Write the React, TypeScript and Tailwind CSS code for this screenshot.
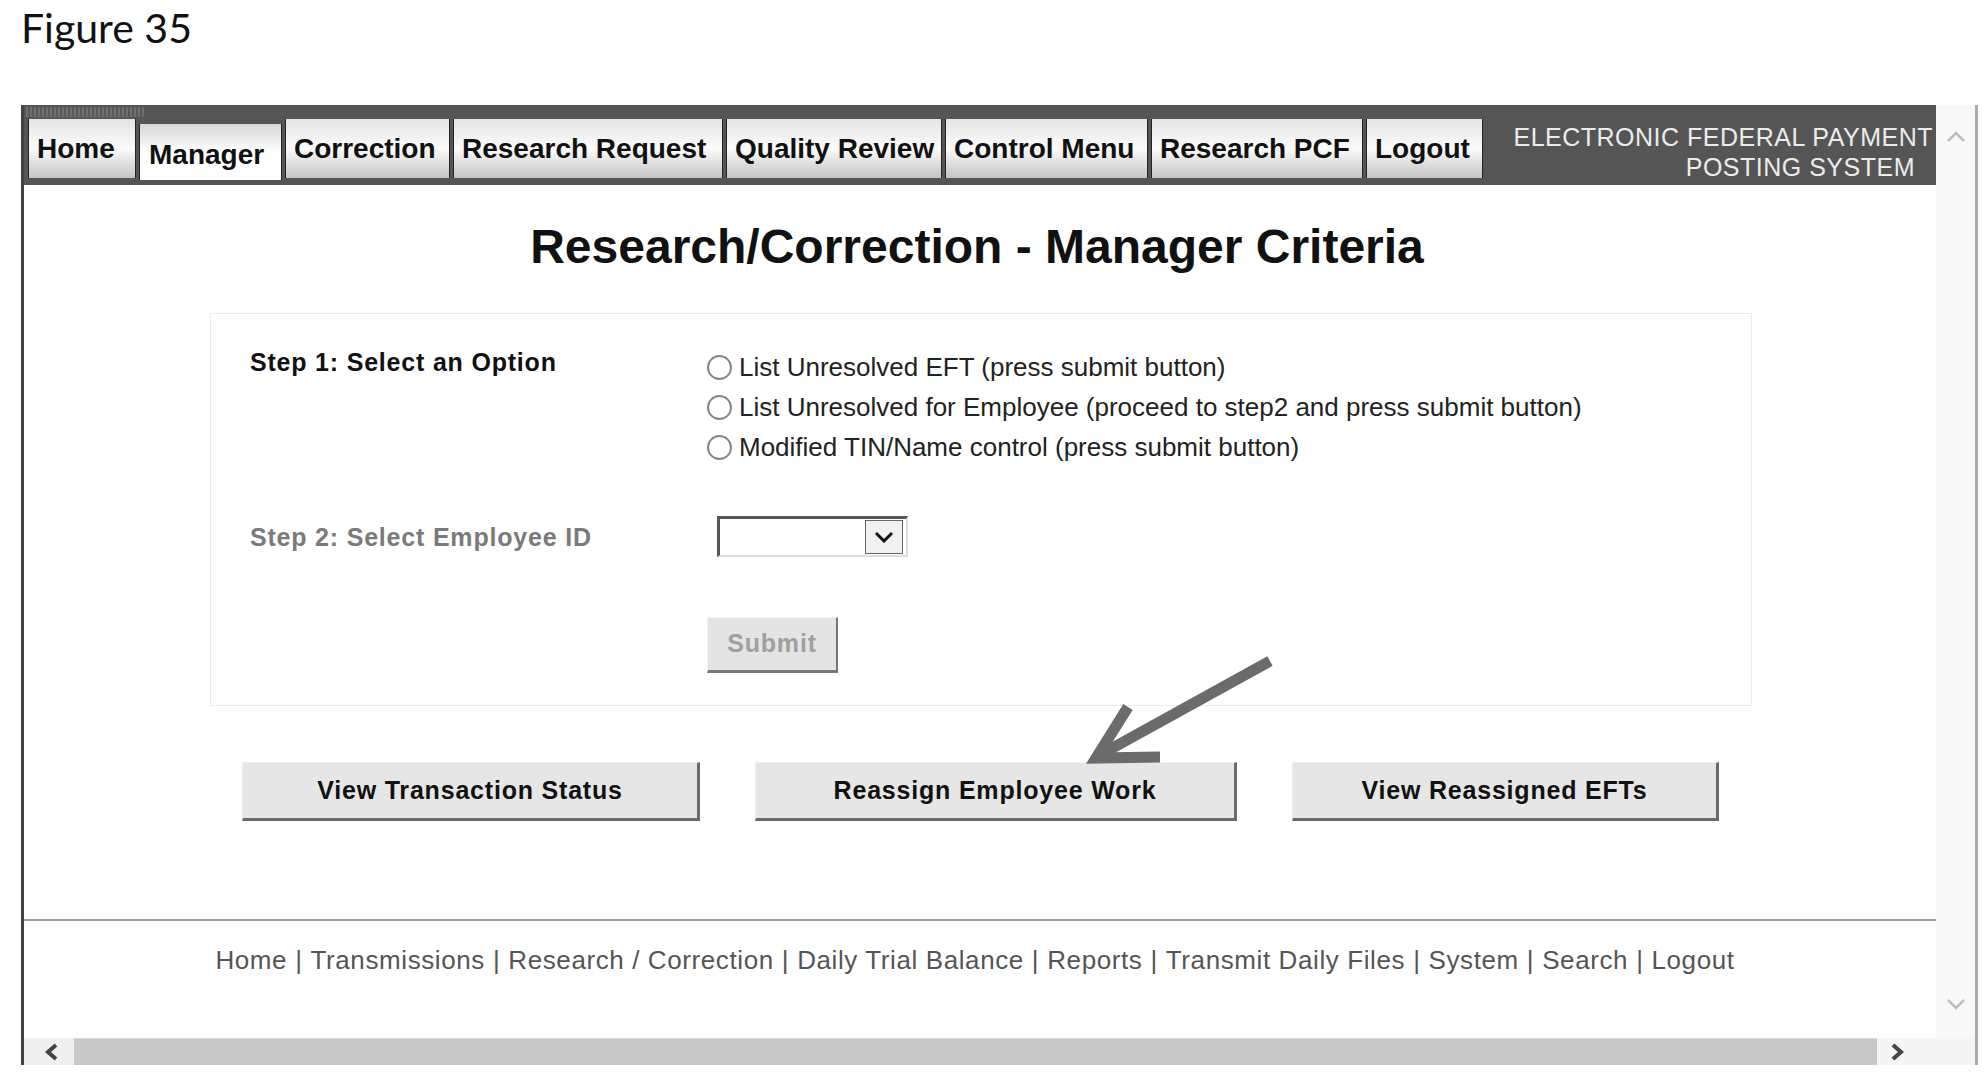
import React from "react";

const tabs = [
  { label: "Home", cls: "w-[108px]" },
  { label: "Manager", cls: "w-[143px]", active: true },
  { label: "Correction", cls: "w-[165px]" },
  { label: "Research Request", cls: "w-[270px]" },
  { label: "Quality Review", cls: "w-[216px]" },
  { label: "Control Menu", cls: "w-[203px]" },
  { label: "Research PCF", cls: "w-[212px]" },
  { label: "Logout", cls: "w-[117px]" },
];

const radios = [
  "List Unresolved EFT (press submit button)",
  "List Unresolved for Employee (proceed to step2 and press submit button)",
  "Modified TIN/Name control (press submit button)",
];

const footerLinks = [
  "Home",
  "Transmissions",
  "Research / Correction",
  "Daily Trial Balance",
  "Reports",
  "Transmit Daily Files",
  "System",
  "Search",
  "Logout",
];

function Tab({ label, cls, active }: { label: string; cls: string; active?: boolean }) {
  if (active) {
    return (
      <div
        className={`${cls} mt-[5px] h-[56px] flex items-center pl-[9px] pt-[6px] bg-gradient-to-b from-[#d6d6d6] via-[#ffffff] to-[#ffffff] border-x border-[#222] text-[28px] font-bold text-[#111] whitespace-nowrap`}
      >
        {label}
      </div>
    );
  }
  return (
    <div
      className={`${cls} h-[59px] flex items-center pl-[8px] bg-gradient-to-b from-[#e4e4e4] via-[#fbfbfb] to-[#c4c4c4] border-x border-[#222] text-[28px] font-bold text-[#111] whitespace-nowrap`}
    >
      {label}
    </div>
  );
}

export default function App() {
  return (
    <div className="relative w-[1988px] h-[1088px] bg-white overflow-hidden font-['Liberation_Sans',Arial,sans-serif]">
      {/* Figure caption */}
      <div className="h-[105px] pl-[21px] pt-[4px]">
        <div className="font-['Lato',sans-serif] text-[41px] leading-[48px] text-[#111]">Figure 35</div>
      </div>

      {/* Browser frame */}
      <div className="ml-[21px] w-[1957px] h-[960px] border-l-[3px] border-l-[#444] border-r-[3px] border-r-[#aaaaaa] flex flex-col">
        <div className="flex h-[933px]">
          {/* Content column */}
          <div className="w-[1912px] flex flex-col">
            {/* Nav bar */}
            <div className="relative h-[80px] bg-[#555555] flex pt-[14px] pl-[4px]">
              <span className="absolute left-[2px] top-[2px] w-[118px] h-[10px] bg-[repeating-linear-gradient(90deg,#7a7a7a_0px,#7a7a7a_2px,#5a5a5a_2px,#5a5a5a_4px)] opacity-70" />
              <div className="flex gap-[3px] items-start">
                {tabs.map((t) => (
                  <Tab key={t.label} label={t.label} cls={t.cls} active={t.active} />
                ))}
              </div>
              <div className="ml-auto mt-[3px] pr-[3px] text-right text-[25px] leading-[30px] tracking-[0.5px] text-[#ececec] whitespace-nowrap">
                <div>ELECTRONIC FEDERAL PAYMENT</div>
                <div className="mr-[18px]">POSTING SYSTEM</div>
              </div>
            </div>

            {/* Title */}
            <h1 className="mt-[34px] pr-[6px] text-center text-[48px] leading-[55px] font-bold text-[#111]">
              Research/Correction - Manager Criteria
            </h1>

            {/* Form box */}
            <div className="mt-[39px] ml-[186px] w-[1542px] h-[393px] border border-[#ececec] pl-[39px] pt-[33px] flex flex-col">
              <div className="flex">
                <div className="w-[461px] text-[25px] leading-[30px] font-bold tracking-[0.8px] text-[#111]">
                  Step 1: Select an Option
                </div>
                <div className="flex flex-col">
                  {radios.map((r) => (
                    <label key={r} className="h-[40px] flex items-center gap-[7px] text-[26px] text-[#222] whitespace-nowrap">
                      <span className="w-[25px] h-[25px] rounded-full border-2 border-[#858585] bg-white shrink-0 -ml-[4px]" />
                      <span>{r}</span>
                    </label>
                  ))}
                </div>
              </div>

              <div className="flex items-center mt-[49px]">
                <div className="w-[461px] text-[25px] leading-[30px] font-bold tracking-[0.8px] text-[#7a7a7a]">
                  Step 2: Select Employee ID
                </div>
                <div className="ml-[6px] w-[191px] h-[41px] flex items-center justify-end pr-[3px] bg-white border-t-[3px] border-l-[3px] border-t-[#555] border-l-[#555] border-b-2 border-r-2 border-b-[#dddddd] border-r-[#dddddd]">
                  <div className="w-[38px] h-[34px] bg-[#f0f0f0] border border-[#666] flex items-center justify-center">
                    <svg width="20" height="12" viewBox="0 0 20 12">
                      <polyline points="2,2 10,10 18,2" fill="none" stroke="#111" strokeWidth="3" />
                    </svg>
                  </div>
                </div>
              </div>

              <div className="mt-[60px] ml-[457px]">
                <button className="w-[131px] h-[56px] bg-[#e4e4e4] border-t border-l border-t-[#f2f2f2] border-l-[#f2f2f2] border-r-2 border-b-[3px] border-r-[#777] border-b-[#777] text-[25px] font-bold tracking-[0.8px] text-[#a0a0a0]">
                  Submit
                </button>
              </div>
            </div>

            {/* Bottom buttons */}
            <div className="mt-[56px] ml-[218px] flex gap-[55px]">
              <button className="w-[458px] h-[59px] bg-[#e6e6e6] border-t border-l border-t-[#f0f0f0] border-l-[#f0f0f0] border-r-[3px] border-b-[3px] border-r-[#6a6a6a] border-b-[#6a6a6a] text-[25px] font-bold tracking-[0.8px] text-[#111]">
                View Transaction Status
              </button>
              <button className="w-[482px] h-[59px] bg-[#e6e6e6] border-t border-l border-t-[#f0f0f0] border-l-[#f0f0f0] border-r-[3px] border-b-[3px] border-r-[#6a6a6a] border-b-[#6a6a6a] text-[25px] font-bold tracking-[0.8px] text-[#111]">
                Reassign Employee Work
              </button>
              <button className="w-[427px] h-[59px] bg-[#e6e6e6] border-t border-l border-t-[#f0f0f0] border-l-[#f0f0f0] border-r-[3px] border-b-[3px] border-r-[#6a6a6a] border-b-[#6a6a6a] text-[25px] font-bold tracking-[0.8px] text-[#111]">
                View Reassigned EFTs
              </button>
            </div>

            {/* Footer */}
            <div className="mt-[98px] h-[2px] bg-[#a0a0a0]" />
            <div className="mt-[24px] pr-[10px] text-center text-[26px] leading-[31px] tracking-[0.6px] text-[#555] whitespace-nowrap">
              {footerLinks.map((l, i) => (
                <span key={l}>
                  {i > 0 && <span className="mx-[8px]">|</span>}
                  {l}
                </span>
              ))}
            </div>
          </div>

          {/* Vertical scrollbar */}
          <div className="flex-1 bg-[#f8f8f8] flex flex-col justify-between items-center pt-[26px] pb-[28px]">
            <svg width="20" height="12" viewBox="0 0 20 12">
              <polyline points="2,10 10,2 18,10" fill="none" stroke="#bdbdbd" strokeWidth="2.5" />
            </svg>
            <svg width="20" height="12" viewBox="0 0 20 12">
              <polyline points="2,2 10,10 18,2" fill="none" stroke="#bdbdbd" strokeWidth="2.5" />
            </svg>
          </div>
        </div>

        {/* Horizontal scrollbar */}
        <div className="h-[27px] flex">
          <div className="w-[50px] bg-[#efefef] flex items-center pl-[20px]">
            <svg width="14" height="18" viewBox="0 0 14 18">
              <polyline points="12,2 4,9 12,16" fill="none" stroke="#444" strokeWidth="4" />
            </svg>
          </div>
          <div className="w-[1803px] bg-[#c8c8c8] border-t border-t-[#d8d8d8]" />
          <div className="flex-1 bg-[#f5f5f5] flex items-center pl-[14px]">
            <svg width="14" height="18" viewBox="0 0 14 18">
              <polyline points="2,2 10,9 2,16" fill="none" stroke="#444" strokeWidth="4" />
            </svg>
          </div>
        </div>
      </div>

      {/* Annotation arrow */}
      <svg className="absolute left-0 top-0 pointer-events-none" width="1988" height="1088" viewBox="0 0 1988 1088">
        <line x1="1270" y1="661" x2="1098" y2="756" stroke="#6b6b6b" strokeWidth="11" />
        <polyline points="1128,707 1096,758 1160,757" fill="none" stroke="#6b6b6b" strokeWidth="11" strokeLinejoin="miter" />
      </svg>
    </div>
  );
}
